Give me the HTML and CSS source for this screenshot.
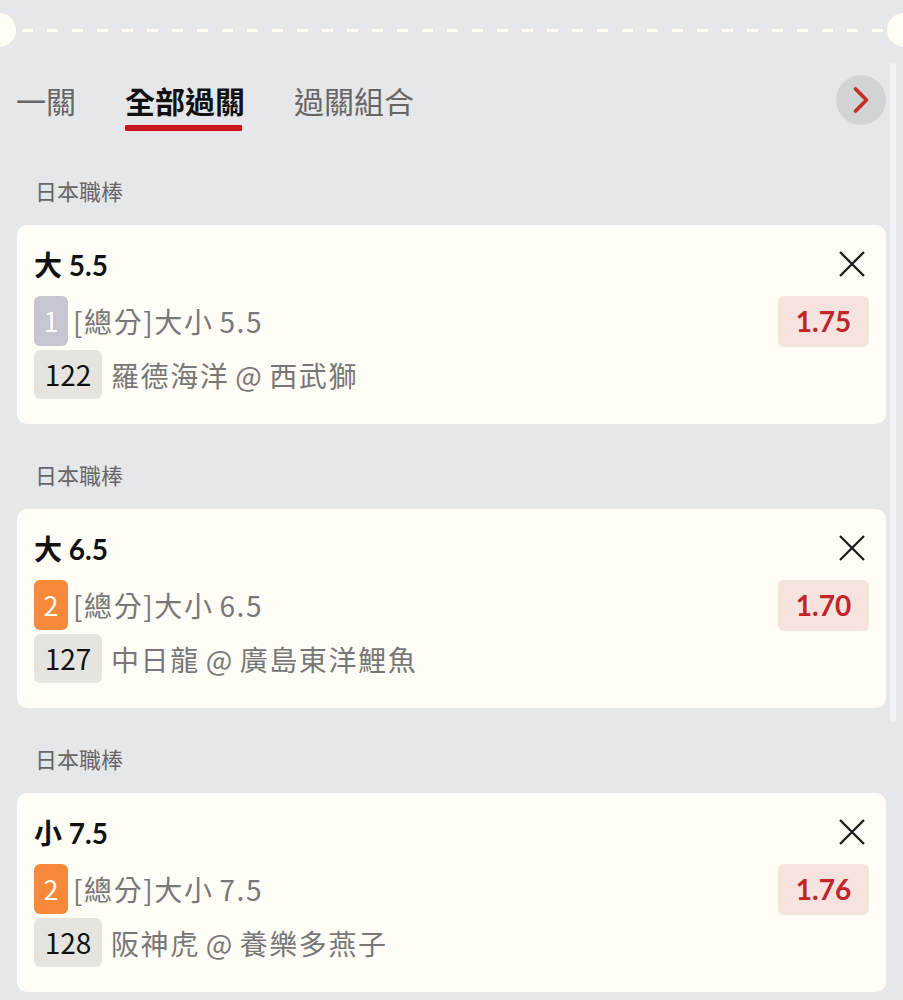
FILE: index.html
```html
<!DOCTYPE html>
<html lang="zh-Hant">
<head>
  <meta charset="UTF-8">
  <title>過關投注</title>
  <link rel="stylesheet" href="styles.css">
</head>
<body>

  <div class="divider">
    <span class="notch notch-left"></span>
    <span class="dashes"></span>
    <span class="notch notch-right"></span>
  </div>

  <div class="tabs">
    <div class="tab">一關</div>
    <div class="tab active">全部過關</div>
    <div class="tab">過關組合</div>
    <button class="tab-next" aria-label="下一頁">
      <svg width="50" height="50" viewBox="0 0 50 50"><polyline points="19.5,14 30.5,25 19.5,36" fill="none" stroke="#c4301f" stroke-width="3.6" stroke-linecap="round" stroke-linejoin="round"/></svg>
    </button>
  </div>

  <div class="scrollbar"></div>

  <div class="slip">
    <div class="league">日本職棒</div>
    <div class="card">
      <div class="card-head">
        <span class="pick">大 5.5</span>
        <button class="close" aria-label="移除">
          <svg width="28" height="28" viewBox="0 0 28 28"><path d="M2 2 L26 26 M26 2 L2 26" stroke="#1b1b1b" stroke-width="2.3" fill="none"/></svg>
        </button>
      </div>
      <div class="line">
        <span class="seq seq-gray">1</span>
        <span class="market">[總分]大小 5.5</span>
        <span class="odds">1.75</span>
      </div>
      <div class="line">
        <span class="code">122</span>
        <span class="match">羅德海洋 @ 西武獅</span>
      </div>
    </div>

    <div class="league">日本職棒</div>
    <div class="card">
      <div class="card-head">
        <span class="pick">大 6.5</span>
        <button class="close" aria-label="移除">
          <svg width="28" height="28" viewBox="0 0 28 28"><path d="M2 2 L26 26 M26 2 L2 26" stroke="#1b1b1b" stroke-width="2.3" fill="none"/></svg>
        </button>
      </div>
      <div class="line">
        <span class="seq seq-orange">2</span>
        <span class="market">[總分]大小 6.5</span>
        <span class="odds">1.70</span>
      </div>
      <div class="line">
        <span class="code">127</span>
        <span class="match">中日龍 @ 廣島東洋鯉魚</span>
      </div>
    </div>

    <div class="league">日本職棒</div>
    <div class="card">
      <div class="card-head">
        <span class="pick">小 7.5</span>
        <button class="close" aria-label="移除">
          <svg width="28" height="28" viewBox="0 0 28 28"><path d="M2 2 L26 26 M26 2 L2 26" stroke="#1b1b1b" stroke-width="2.3" fill="none"/></svg>
        </button>
      </div>
      <div class="line">
        <span class="seq seq-orange">2</span>
        <span class="market">[總分]大小 7.5</span>
        <span class="odds">1.76</span>
      </div>
      <div class="line">
        <span class="code">128</span>
        <span class="match">阪神虎 @ 養樂多燕子</span>
      </div>
    </div>
  </div>

</body>
</html>
```

FILE: styles.css
```css
html, body {
  margin: 0;
  padding: 0;
}
body {
  background: #e6e7e9;
  font-family: "Noto Sans CJK TC", "Noto Sans", sans-serif;
  color: #111;
  overflow: hidden;
  position: relative;
  min-height: 1000px;
}
button {
  border: none;
  background: none;
  padding: 0;
  margin: 0;
  cursor: pointer;
}

/* ticket edge */
.divider {
  display: flex;
  align-items: center;
  height: 60px;
}
.notch {
  flex: none;
  width: 34px;
  height: 34px;
  border-radius: 50%;
  background: #fffdf4;
}
.notch-left {
  margin-left: -18px;
}
.notch-right {
  margin-right: -18px;
}
.dashes {
  flex: 1;
  height: 3px;
  background: repeating-linear-gradient(90deg, transparent 0 6px, #fffdf4 6px 17px, transparent 17px 25px);
}

/* tabs */
.tabs {
  display: flex;
  align-items: flex-start;
  gap: 49px;
  height: 60px;
  padding: 20px 17px 0 16px;
}
.tab {
  font-size: 30px;
  line-height: 40px;
  color: #666;
  white-space: nowrap;
}
.tab.active {
  color: #111;
  font-weight: 700;
}
.tab.active::after {
  content: "";
  display: block;
  height: 6px;
  margin: 5px 3px 0 0;
  background: #c8141c;
  border-radius: 1px;
}
.tab-next {
  margin-left: auto;
  width: 50px;
  height: 50px;
  margin-top: -5px;
  border-radius: 50%;
  background: #d2d3d6;
  display: flex;
}

.scrollbar {
  position: absolute;
  left: 890px;
  top: 63px;
  width: 6px;
  height: 659px;
  border-radius: 3px;
  background: #f2f2f4;
}

/* bet slip */
.slip {
  padding: 0 17px;
}
.league {
  font-size: 22px;
  line-height: 30px;
  color: #666;
  padding-left: 18px;
  margin: 35px 0 20px;
}
.card {
  background: #fffdf5;
  border-radius: 10px;
  padding: 22px 17px 25px 17px;
}
.card-head {
  display: flex;
  align-items: center;
  justify-content: space-between;
  height: 34px;
}
.pick {
  font-family: Lato, "Noto Sans CJK TC", sans-serif;
  font-weight: 700;
  font-size: 28px;
  color: #111;
}
.close {
  display: flex;
  margin-right: 3px;
}
.line {
  display: flex;
  align-items: center;
}
.card-head + .line {
  margin-top: 15px;
  height: 50px;
}
.line + .line {
  margin-top: 4px;
}
.seq {
  width: 34px;
  height: 50px;
  border-radius: 6px;
  color: #fff;
  font-size: 27px;
  line-height: 50px;
  text-align: center;
}
.seq-gray {
  background: #c5c6cf;
}
.seq-orange {
  background: #f68a39;
}
.market, .match {
  font-size: 28px;
  letter-spacing: 1.6px;
  word-spacing: -2px;
  color: #777;
  white-space: nowrap;
}
.market {
  margin-left: 5px;
}
.match {
  margin-left: 9px;
}
.odds {
  margin-left: auto;
  width: 91px;
  height: 51px;
  line-height: 51px;
  border-radius: 6px;
  background: #f7e3dd;
  color: #c1242b;
  font-family: Lato, sans-serif;
  font-weight: 700;
  font-size: 28px;
  text-align: center;
}
.code {
  width: 68px;
  height: 49px;
  line-height: 49px;
  border-radius: 6px;
  background: #e6e4de;
  font-size: 28px;
  text-align: center;
  color: #111;
}
```
